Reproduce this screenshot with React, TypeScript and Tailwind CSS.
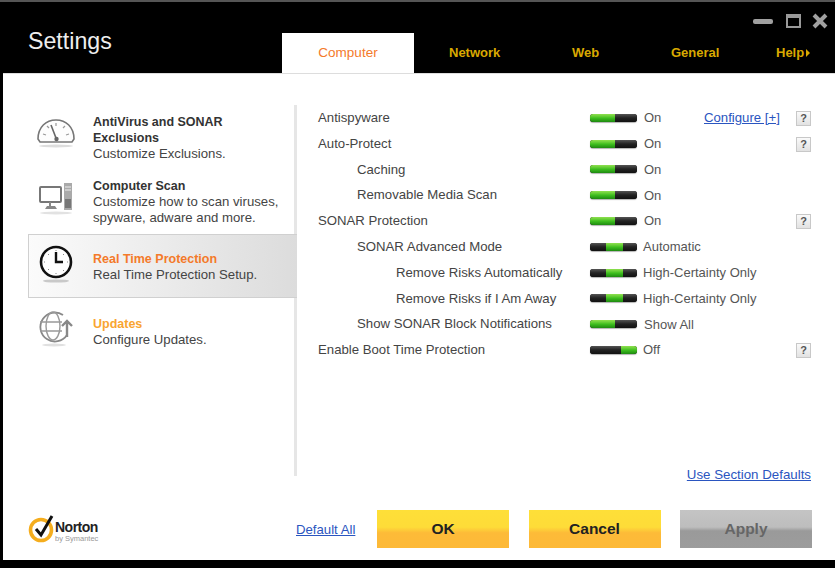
import React from 'react'

const font = "font-['Liberation_Sans',Arial,sans-serif]"

type Mode = 'on' | 'mid' | 'off'

type Row = {
  label: string
  indent: 0 | 1 | 2
  mode: Mode
  value: string
  configure?: boolean
  help?: boolean
}

const rows: Row[] = [
  { label: 'Antispyware', indent: 0, mode: 'on', value: 'On', configure: true, help: true },
  { label: 'Auto-Protect', indent: 0, mode: 'on', value: 'On', help: true },
  { label: 'Caching', indent: 1, mode: 'on', value: 'On' },
  { label: 'Removable Media Scan', indent: 1, mode: 'on', value: 'On' },
  { label: 'SONAR Protection', indent: 0, mode: 'on', value: 'On', help: true },
  { label: 'SONAR Advanced Mode', indent: 1, mode: 'mid', value: 'Automatic' },
  { label: 'Remove Risks Automatically', indent: 2, mode: 'mid', value: 'High-Certainty Only' },
  { label: 'Remove Risks if I Am Away', indent: 2, mode: 'mid', value: 'High-Certainty Only' },
  { label: 'Show SONAR Block Notifications', indent: 1, mode: 'on', value: 'Show All' },
  { label: 'Enable Boot Time Protection', indent: 0, mode: 'off', value: 'Off', help: true },
]

const indentClass = ['pl-0', 'pl-[39px]', 'pl-[78px]']

function Toggle({ mode }: { mode: Mode }) {
  const green = 'bg-gradient-to-b from-[#8fe04f] via-[#3fc01f] to-[#1d8a10]'
  const dark = 'bg-gradient-to-b from-[#555] via-[#222] to-[#111]'
  return (
    <div className="flex h-[8px] w-[47px] shrink-0 overflow-hidden rounded-[3px] bg-[#111] shadow-[0_1px_1px_rgba(0,0,0,0.3)]">
      {mode === 'on' && (
        <>
          <div className={`w-[25px] ${green}`} />
          <div className={`flex-1 ${dark}`} />
        </>
      )}
      {mode === 'mid' && (
        <>
          <div className={`w-[16px] ${dark}`} />
          <div className={`w-[17px] ${green}`} />
          <div className={`flex-1 ${dark}`} />
        </>
      )}
      {mode === 'off' && (
        <>
          <div className={`flex-1 ${dark}`} />
          <div className={`w-[16px] ${green}`} />
        </>
      )}
    </div>
  )
}

function HelpButton() {
  return (
    <div className="flex h-[15px] w-[15px] items-center justify-center border border-[#c8c8c8] bg-gradient-to-b from-[#fafafa] to-[#e2e2e2] text-[11px] font-bold text-[#555]">
      ?
    </div>
  )
}

function SettingRow({ row }: { row: Row }) {
  return (
    <div className="flex h-[25.8px] items-center">
      <div className={`w-[272px] shrink-0 text-[13.2px] text-[#444] ${indentClass[row.indent]}`}>{row.label}</div>
      <Toggle mode={row.mode} />
      <div className={`w-[67px] shrink-0 whitespace-nowrap text-[13px] text-[#555] ${row.mode === 'on' ? 'pl-[7px]' : 'pl-[6px]'}`}>
        {row.value}
      </div>
      <div className="w-[92px] shrink-0 whitespace-nowrap text-[13.2px] text-[#2a55c0] underline">
        {row.configure ? 'Configure [+]' : ''}
      </div>
      <div className="w-[15px] shrink-0 pt-[1px]">{row.help && <HelpButton />}</div>
    </div>
  )
}

function GaugeIcon() {
  return (
    <svg width="40" height="36" viewBox="0 0 40 36" fill="none">
      <path d="M2 25 C2 13 10 6 20 6 C30 6 38 13 38 25 L36 28 H4 Z" stroke="#777" strokeWidth="1.6" fill="#fdfdfd" />
      <path d="M7 20l3 1M11 12l2 2M20 9v3M29 12l-2 2M33 20l-3 1" stroke="#999" strokeWidth="1.2" />
      <path d="M15 11l5 13" stroke="#666" strokeWidth="1.6" />
      <circle cx="20.5" cy="25" r="2.2" fill="#666" />
      <ellipse cx="20" cy="32" rx="17" ry="1.4" fill="#ddd" />
    </svg>
  )
}

function ComputerIcon() {
  return (
    <svg className="mt-[3px]" width="36" height="36" viewBox="0 0 36 36" fill="none">
      <rect x="2" y="6" width="21" height="15" rx="1" stroke="#777" strokeWidth="2" fill="#fff" />
      <path d="M9 25h8l2 3H7z" fill="#888" />
      <path d="M12 21v4" stroke="#888" strokeWidth="2" />
      <rect x="26" y="2" width="8" height="27" fill="#aaa" />
      <path d="M27 6h6M27 9h6" stroke="#eee" strokeWidth="1.2" />
      <rect x="27" y="18" width="6" height="9" fill="#777" />
      <ellipse cx="18" cy="32" rx="16" ry="1.4" fill="#e2e2e2" />
    </svg>
  )
}

function ClockIcon() {
  return (
    <svg className="-translate-y-[2px]" width="36" height="40" viewBox="0 0 36 40" fill="none">
      <circle cx="18" cy="17" r="15" stroke="#111" strokeWidth="2.6" fill="#fff" />
      <path d="M18 7v10h7" stroke="#111" strokeWidth="2.4" />
      <path d="M18 5v1M18 28v1M6 17h1M29 17h1M10 9l1 1M25 25l1 1M10 25l1-1M25 10l1-1" stroke="#888" strokeWidth="1" />
      <ellipse cx="18" cy="36" rx="13" ry="1.6" fill="#c9c9c9" />
    </svg>
  )
}

function GlobeIcon() {
  return (
    <svg className="-mt-[6px]" width="36" height="38" viewBox="0 0 36 38" fill="none">
      <path d="M25 5 A14.5 14.5 0 1 0 29 25" stroke="#888" strokeWidth="1.8" />
      <ellipse cx="15" cy="16" rx="7" ry="14" stroke="#999" strokeWidth="1.4" />
      <path d="M2 12h22M2 21h22" stroke="#999" strokeWidth="1.4" />
      <path d="M29 27V11M24 16l5-5 5 5" stroke="#888" strokeWidth="2.4" />
      <ellipse cx="16" cy="35" rx="12" ry="1.4" fill="#e0e0e0" />
    </svg>
  )
}

function WindowButtons() {
  return (
    <div className="flex items-center">
      <div className="mr-[13px] h-[5px] w-[20px] rounded-[2px] bg-[#a0a0a0]" />
      <div className="mr-[11px] h-[14px] w-[15px] border-2 border-t-[4px] border-[#999]" />
      <svg width="16" height="16" viewBox="0 0 16 16">
        <path d="M2 2l12 12M14 2L2 14" stroke="#a0a0a0" strokeWidth="4" />
      </svg>
    </div>
  )
}

function SideItem({
  icon,
  title,
  titleClass,
  desc,
  className,
}: {
  icon: React.ReactNode
  title: string
  titleClass: string
  desc: string
  className: string
}) {
  return (
    <div className={`flex ${className}`}>
      <div className="flex w-[65px] shrink-0 justify-center pr-[10px]">{icon}</div>
      <div className="text-[13.2px] leading-[16px]">
        <div className={titleClass}>{title}</div>
        <div className="text-[#444]">{desc}</div>
      </div>
    </div>
  )
}

function FooterButton({ label, gray }: { label: string; gray?: boolean }) {
  return (
    <div
      className={`flex h-[38px] w-[132px] items-center justify-center text-[15.5px] font-bold ${
        gray
          ? 'bg-[linear-gradient(#c4c4c4_0%,#bdbdbd_45%,#9a9a9a_55%,#9c9c9c_100%)] text-[#666]'
          : 'bg-[linear-gradient(#fedf38_0%,#fedc38_45%,#fdbb38_60%,#fdb938_100%)] text-[#222]'
      }`}
    >
      {label}
    </div>
  )
}

function NortonLogo() {
  return (
    <div className="flex items-start">
      <svg width="28" height="30" viewBox="0 0 28 30" fill="none">
        <circle cx="13" cy="17" r="10.5" stroke="#f5ad1d" strokeWidth="3.6" />
        <path d="M8 16l5 6L24 3" stroke="#111" strokeWidth="3" />
      </svg>
      <div className="-ml-[1px] pt-[7px]">
        <div className="text-[14px] font-bold leading-[14px] tracking-[-0.5px] text-[#222]">Norton</div>
        <div className="text-[7.5px] leading-[9px] text-[#999]">by Symantec</div>
      </div>
    </div>
  )
}

export default function App() {
  return (
    <div className={`flex h-[568px] w-[835px] flex-col overflow-hidden border-t-2 border-[#555] bg-black ${font}`}>
      {/* Title bar and tabs */}
      <div className="relative flex h-[71px] shrink-0 items-end">
        <div className="w-[282px] shrink-0 self-start pl-[28px] pt-[24px] text-[23.2px] leading-[30px] text-[#eee]">
          Settings
        </div>
        <div className="flex h-[40px] w-[132px] items-center justify-center bg-white text-[13.5px] text-[#f47a2a]">
          Computer
        </div>
        <div className="flex h-[40px] flex-1 items-center text-[13px] font-bold text-[#d9a900]">
          <div className="w-[121px] pl-[35px]">Network</div>
          <div className="w-[109px] pl-[37px]">Web</div>
          <div className="w-[132px] pl-[27px]">General</div>
          <div className="flex items-center gap-[2px]">
            Help
            <span className="h-0 w-0 border-y-[4px] border-l-[4px] border-y-transparent border-l-[#d9a900]" />
          </div>
        </div>
        <div className="absolute right-[7px] top-[11px]">
          <WindowButtons />
        </div>
      </div>

      {/* Main panel */}
      <div className="mb-[8px] ml-[3px] flex flex-1 flex-col border-t border-[#ddd] bg-white">
        <div className="flex items-start pt-[31px]">
          <div className="h-[371px] w-[294px] shrink-0 border-r-[3px] border-[#e6e6e6]">
            <div className="pl-[25px]">
              <SideItem
                className="h-[64px] pt-[9px]"
                icon={<GaugeIcon />}
                title="AntiVirus and SONAR Exclusions"
                titleClass="font-bold text-[12.5px] text-[#333] w-[150px]"
                desc="Customize Exclusions."
              />
              <SideItem
                className="h-[65px] pt-[9px]"
                icon={<ComputerIcon />}
                title="Computer Scan"
                titleClass="font-bold text-[12.5px] text-[#333]"
                desc="Customize how to scan viruses, spyware, adware and more."
              />
              <SideItem
                className="-mr-[3px] h-[64px] items-center border-y border-[#d0d0d0] bg-gradient-to-r from-[#fbfbfb] to-[#dcdcdc] pt-[2px] shadow-[inset_1px_0_0_#d0d0d0]"
                icon={<ClockIcon />}
                title="Real Time Protection"
                titleClass="font-bold text-[12.5px] text-[#f47a2a]"
                desc="Real Time Protection Setup."
              />
              <SideItem
                className="h-[64px] pt-[18px]"
                icon={<GlobeIcon />}
                title="Updates"
                titleClass="font-bold text-[12.5px] text-[#f9a531]"
                desc="Configure Updates."
              />
            </div>
          </div>
          <div className="flex h-[378px] flex-1 flex-col justify-between pl-[21px] pr-[25px]">
            <div>
              {rows.map((row) => (
                <SettingRow key={row.label} row={row} />
              ))}
            </div>
            <div className="text-right text-[13.3px] leading-[16px] text-[#2a55c0] underline">Use Section Defaults</div>
          </div>
        </div>

        {/* Footer */}
        <div className="flex flex-1 items-start pl-[25px] pr-[22px] pt-[27px]">
          <div className="w-[268px] shrink-0 pt-[3px]">
            <NortonLogo />
          </div>
          <div className="w-[81px] shrink-0 pt-[10px] text-[13.2px] text-[#2a55c0] underline">Default All</div>
          <div className="flex gap-[19.5px]">
            <FooterButton label="OK" />
            <FooterButton label="Cancel" />
            <FooterButton label="Apply" gray />
          </div>
        </div>
      </div>
    </div>
  )
}
